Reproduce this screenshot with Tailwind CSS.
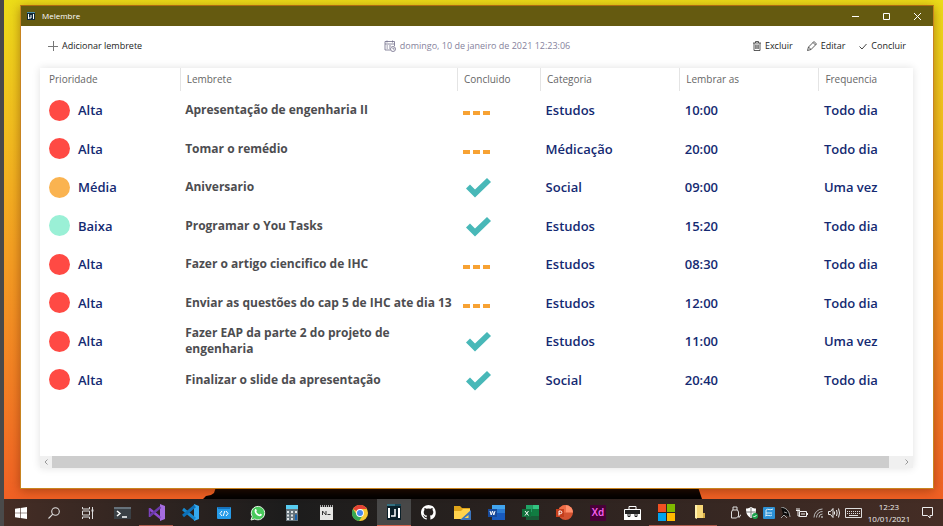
<!DOCTYPE html>
<html lang="pt-BR">
<head>
<meta charset="utf-8">
<meta name="viewport" content="width=device-width, initial-scale=1">
<title>Melembre</title>
<script src="https://cdn.jsdelivr.net/npm/@tailwindcss/browser@4"></script>
</head>
<body class="flex h-screen overflow-hidden bg-[#4a4a4a] pl-1 font-['Open_Sans','Noto_Sans',sans-serif]">
<svg class="hidden">
  <symbol id="pending" viewBox="0 0 28 24"><path d="M0 13h7v4H0zM10 13h7v4h-7zM20 13h7v4h-7z" fill="#f7a233"/></symbol>
  <symbol id="done" viewBox="0 0 28 24"><path d="M3 13.500 7 9.500 12 14.500 24 3 28 7 12 22.500z" fill="#48b8b8"/></symbol>
</svg>
<div class="flex min-w-0 flex-1 flex-col">
  <main class="relative flex flex-1 flex-col bg-linear-to-b from-[#ecdc18] via-[#f4a022] to-[#f06024] pt-[5px] pr-[9px] pb-[10px] pl-4">
    <svg class="absolute bottom-0 left-[199px] h-[12px] w-[502px]" viewBox="0 0 502 12" preserveAspectRatio="none" aria-hidden="true"><path d="M0 12 3 9 8 8 11 6 13 0H495L499 12z" fill="#000"/></svg>
    <section class="relative flex flex-1 flex-col border border-[#c88420] border-t-[#b06a10] bg-white shadow-[0_2px_10px_rgba(90,30,0,0.45)]">
      <header class="flex h-5 items-center bg-[#655a10] text-white">
        <svg class="ml-[6px] size-2" viewBox="0 0 8 8" aria-hidden="true"><path fill="#102a38" d="M0 0h8v8H0z"/><path fill="#4a8aa0" d="M0 0h8v1H0z"/><path d="M1.500 2v5M6.500 2v5M2 6h2V3" stroke="#fff" fill="none"/></svg>
        <h1 class="ml-[7px] flex-1 text-[8px] font-medium">Melembre</h1>
        <button aria-label="Minimizar" class="flex h-5 w-[31px] items-center justify-center"><svg class="size-[7px]" viewBox="0 0 7 7"><path d="M0 3.500h7" stroke="#fff"/></svg></button>
        <button aria-label="Maximizar" class="flex h-5 w-[31px] items-center justify-center"><svg class="size-[7px]" viewBox="0 0 7 7"><path d="M.5.500h6v6h-6z" stroke="#fff" fill="none"/></svg></button>
        <button aria-label="Fechar" class="flex h-5 w-[31px] items-center justify-center"><svg class="size-[7px]" viewBox="0 0 7 7"><path d="m0 0 7 7m0-7-7 7" stroke="#fff" fill="none"/></svg></button>
      </header>
      <div class="grid h-[42px] grid-cols-[1fr_auto_1fr] items-center px-[27px] pb-[3px] text-[9px] text-[#1c1c1c]">
        <button class="flex items-center gap-1 justify-self-start"><svg class="size-[10px]" viewBox="0 0 10 10" fill="none" stroke="#777"><path d="M5.500 0v10M0 5.500h10"/></svg>Adicionar lembrete</button>
        <p class="flex items-center gap-1 text-[#85829c]"><svg class="size-3" viewBox="0 0 24 24" fill="none" stroke="#77748f" stroke-width="1.700"><path d="M13 20H2V3h19v9M2 8h19M6 1v4M17 1v4M5 12h3M10 12h4M5 16h3M10 16h2"/><circle cx="18" cy="18" r="5"/><path d="M18 15v3h3"/></svg><time datetime="2021-01-10T12:23:06">domingo, 10 de janeiro de 2021 12:23:06</time></p>
        <div class="flex gap-[14px] justify-self-end">
          <button class="flex items-center gap-1"><svg class="h-[10px] w-2" viewBox="0 0 16 20" fill="none" stroke="#333" stroke-width="1.600"><path d="M0 4h16M5 4V1h6v3M2 4v15h12V4M5.500 7v9M8 7v9M10.500 7v9"/></svg>Excluir</button>
          <button class="flex items-center gap-1"><svg class="size-[10px]" viewBox="0 0 20 20" fill="none" stroke="#333" stroke-width="1.600"><path d="m1 19 2-7L14 1l5 5L8 17zM12 3l5 5M3 12l5 5"/></svg>Editar</button>
          <button class="flex items-center gap-1"><svg class="h-[10px] w-2" viewBox="0 0 8 10" fill="none" stroke="#444"><path d="M.5 5.500 3 8l4.500-5"/></svg>Concluir</button>
        </div>
      </div>
      <div class="mr-5 mb-5 ml-[19px] flex flex-1 flex-col bg-white shadow-[0_0_8px_rgba(0,0,0,0.12)]">
        <div class="flex-1">
          <table class="w-full table-fixed text-left">
            <thead>
              <tr class="h-[23px] text-[10px] text-[#666]">
                <th class="w-[140px] pl-[9px] font-normal">Prioridade</th>
                <th class="w-[277px] border-l border-[#e4e4e4] pl-[6px] font-normal">Lembrete</th>
                <th class="w-[83px] border-l border-[#e4e4e4] pl-[6px] font-normal">Concluido</th>
                <th class="w-[139px] border-l border-[#e4e4e4] pl-[6px] font-normal">Categoria</th>
                <th class="w-[139px] border-l border-[#e4e4e4] pl-[6px] font-normal">Lembrar as</th>
                <th class="w-[94px] border-l border-[#e4e4e4] pl-[6px] font-normal">Frequencia</th>
              </tr>
            </thead>
            <tbody id="reminders" class="text-[13px] leading-4 font-semibold text-[#142a72]"></tbody>
          </table>
        </div>
        <div class="flex h-3 bg-[#f0f0f0]">
          <button aria-label="Rolar para a esquerda" class="flex w-3 items-center justify-center"><svg class="h-[6px] w-1" viewBox="0 0 4 6"><path d="M3.500.5 1 3l2.500 2.500" fill="none" stroke="#999"/></svg></button>
          <div class="flex-1 bg-[#cdcdcd]"></div>
          <button aria-label="Rolar para a direita" class="flex w-6 items-center justify-end pr-1"><svg class="h-[6px] w-1" viewBox="0 0 4 6"><path d="M.5.5 3 3 .5 5.500" fill="none" stroke="#999"/></svg></button>
        </div>
      </div>
    </section>
  </main>
  <footer class="flex h-[27px] items-center bg-linear-to-r from-[#452d25] via-[#1c1c1c] via-30% to-[#452d25] text-[#eee]">
    <nav class="flex h-full" aria-label="Barra de tarefas">
      <button aria-label="Iniciar" class="flex w-[33px] items-center justify-center"><svg class="size-3" viewBox="0 0 12 12" fill="#fff"><path d="M0 1.700 5 1v4.700H0zM5.600.9 12 0v5.700H5.600zM0 6.300h5V11l-5-.7zM5.600 6.300H12V12l-6.400-.9z"/></svg></button>
      <button aria-label="Pesquisar" class="flex w-[34px] items-center justify-center"><svg class="size-3" viewBox="0 0 12 12" fill="none" stroke="#ddd" stroke-width="1.100"><circle cx="7.500" cy="4.500" r="3.800"/><path d="M4.800 7.200.5 11.500"/></svg></button>
      <button aria-label="Visão de tarefas" class="flex w-[34px] items-center justify-center"><svg class="size-3" viewBox="0 0 12 12" fill="none" stroke="#ddd"><path d="M.5 0v2h7V0M.5 4h7v4h-7zM.5 12v-2h7v2M10.500 0v12"/><path d="M9.500 3.500h2" stroke-width="2"/></svg></button>
      <button aria-label="Terminal" class="flex w-[34px] items-center justify-center"><svg class="h-3 w-[17px]" viewBox="0 0 17 12"><path fill="#3a4045" d="M0 0h17v12H0z"/><path fill="#66717a" d="M0 0h17v2H0z"/><path d="m3 4 3 2.500L3 9M8 10h5" stroke="#fff" stroke-width="1.500" fill="none"/></svg></button>
      <button aria-label="Visual Studio" class="flex w-[34px] items-center justify-center border-b border-[#aa594a]"><svg class="size-[17px]" viewBox="0 0 17 17"><path fill="#a56de0" d="m12 0 5 2v13l-5 2z"/><path fill="none" stroke="#8f4bd0" stroke-width="2.500" d="m1.500 5 11 9"/><path fill="none" stroke="#6a39a9" stroke-width="2.500" d="M1.500 12 12.500 3"/><path fill="none" stroke="#7b42bb" stroke-width="1.500" d="M1.500 4v9"/></svg></button>
      <button aria-label="Visual Studio Code" class="flex w-[34px] items-center justify-center"><svg class="size-[17px]" viewBox="0 0 17 17"><path fill="#35a9ee" d="m12 0 5 2v13l-5 2z"/><path fill="none" stroke="#1788cd" stroke-width="3" d="m1 5 12 10"/><path fill="none" stroke="#0c70b8" stroke-width="3" d="M1 12 13 2"/></svg></button>
      <button aria-label="Editor de código" class="flex w-[34px] items-center justify-center"><svg class="h-3 w-[14px]" viewBox="0 0 14 12"><rect width="14" height="12" rx="1" fill="#269be8"/><path fill="#1571bb" d="M1 0h12v2H1z"/><path d="M5 4 3 6.500 5 9M9 4l2 2.500L9 9M7.800 4 6.200 9" stroke="#fff" fill="none"/></svg></button>
      <button aria-label="WhatsApp" class="flex w-[34px] items-center justify-center"><svg class="size-4" viewBox="0 0 16 16"><path d="M1 15 2.200 11.500A6.700 6.700 0 1 1 4.800 14z" fill="#48c95b" stroke="#e8f8e8"/><path d="M5 4.500c.8-1 1.500 0 1.800 1 .2.600-.7.900-.4 1.400.8 1.300 1.600 2 2.900 2.600.5.200.8-1 1.400-.7 1 .5 1.700.7.800 1.700C9 13 3 7.800 5 4.500z" fill="#fff"/></svg></button>
      <button aria-label="Calculadora" class="flex w-[34px] items-center justify-center"><svg class="h-4 w-3" viewBox="0 0 12 16"><path fill="#66737b" d="M0 0h12v16H0z"/><path fill="#58cdf1" d="M0 0h12v4H0z"/><path d="M1 7h2M5 7h2M9 7h2M1 10.500h2M5 10.500h2M1 14h2M5 14h2" stroke="#e0e5e8" stroke-width="2"/><path d="M9 9.500h2V15H9z" fill="#1762ac"/></svg></button>
      <button aria-label="Notas" class="flex w-[34px] items-center justify-center"><svg class="h-[15px] w-[13px]" viewBox="0 0 13 15"><path fill="#e6e6e4" d="M0 2h13v13H0z"/><path d="M0 1h13" stroke="#aaa" stroke-width="2" stroke-dasharray="1 1"/><path d="M2.500 10V6L6 10V6M7.500 9.500h3" stroke="#333" fill="none"/></svg></button>
      <button aria-label="Chrome" class="flex w-[34px] items-center justify-center"><svg class="size-4" viewBox="0 0 16 16"><circle cx="8" cy="8" r="8" fill="#f6c934"/><path fill="#e44336" d="M8 8 1 4a8 8 0 0 1 14 0H8z"/><path fill="#35a853" d="M1 4a8 8 0 0 0 6 12l4-6-6 0z"/><circle cx="8" cy="8" r="3.900" fill="#fff"/><circle cx="8" cy="8" r="3" fill="#4688ef"/></svg></button>
      <button aria-label="Melembre" class="flex w-[34px] items-center justify-center border-b border-[#d0604a] bg-[#484848]"><svg class="h-4 w-[14px]" viewBox="0 0 14 16"><path fill="#0b2029" d="M0 0h14v16H0z"/><path fill="#347080" d="M0 0h14v2H0z"/><path fill="#164858" d="M8 0h6v2H8z"/><path d="M2 4v10M12 4v10" stroke="#fff" stroke-width="2"/><path d="M4 12h4V5" stroke="#fff" stroke-width="1.500" fill="none"/></svg></button>
      <button aria-label="GitHub" class="flex w-[34px] items-center justify-center"><svg class="size-[15px]" viewBox="0 0 16 16" fill="#fff"><path d="M8 0a8 8 0 0 0-2.530 15.590c.4.070.55-.17.550-.38v-1.500c-2.220.48-2.700-1.070-2.700-1.070-.36-.92-.89-1.170-.89-1.170-.73-.5.050-.49.050-.49.800.060 1.230.83 1.230.83.720 1.220 1.880.87 2.330.66.070-.52.280-.87.510-1.070-1.770-.2-3.640-.89-3.640-3.950 0-.87.310-1.590.82-2.150-.08-.2-.36-1.020.080-2.120 0 0 .67-.21 2.200.82a7.600 7.600 0 0 1 4 0c1.530-1.040 2.200-.82 2.200-.82.440 1.100.16 1.920.080 2.120.51.560.82 1.270.82 2.150 0 3.070-1.870 3.750-3.650 3.950.29.250.54.730.54 1.480v2.200c0 .21.150.46.550.38A8 8 0 0 0 8 0z"/></svg></button>
      <button aria-label="Explorador" class="flex w-[34px] items-center justify-center"><svg class="h-[14px] w-[17px]" viewBox="0 0 17 14"><path fill="#dfa419" d="M0 0h6l2 2h8v11H0z"/><path fill="#ffd34d" d="M0 5h7l2-2h7v10H0z"/><path fill="#3b75bd" fill-rule="evenodd" d="M17 4v10H6zM14.500 9v3h-4z"/></svg></button>
      <button aria-label="Word" class="flex w-[34px] items-center justify-center"><svg class="h-[15px] w-[17px]" viewBox="0 0 17 15"><path fill="#42a5ee" d="M4 0h13v4H4z"/><path fill="#2b7cd3" d="M4 4h13v4H4z"/><path fill="#185abd" d="M4 8h13v7H4z"/><path fill="#174a9b" d="M0 4h9v8H0z"/><path d="m2 6 1.200 4L4.500 6l1.300 4L7 6" fill="none" stroke="#fff"/></svg></button>
      <button aria-label="Excel" class="flex w-[34px] items-center justify-center"><svg class="h-[15px] w-[17px]" viewBox="0 0 17 15"><path fill="#21a366" d="M4 0h6.500v7H4z"/><path fill="#33c481" d="M10.500 0H17v4h-6.500z"/><path fill="#107c41" d="M10.500 4H17v7h-6.500zM4 7h6.500v8H4z"/><path fill="#185c37" d="M4 11h13v4H4z"/><path fill="#10703b" d="M0 4h9v8H0z"/><path d="m3 6 3.500 4.500M6.500 6 3 10.500" fill="none" stroke="#fff"/></svg></button>
      <button aria-label="PowerPoint" class="flex w-[34px] items-center justify-center"><svg class="h-[15px] w-[17px]" viewBox="0 0 17 15"><circle cx="9.500" cy="7.500" r="7.500" fill="#d35230"/><path fill="#ff8f6b" d="M9.500 0a7.500 7.500 0 0 1 7.500 7.500H9.500z"/><path fill="#ed6c47" d="M9.500 0v7.500H2A7.500 7.500 0 0 1 9.500 0z"/><path fill="#c43e1c" d="M0 4h8v8H0z"/><path d="M3 10.500V6h1.500a1.300 1.300 0 0 1 0 2.700H3" fill="none" stroke="#fff"/></svg></button>
      <button aria-label="Adobe XD" class="flex w-[34px] items-center justify-center"><span class="flex h-4 w-4 items-center justify-center bg-[#470137] text-[10px] font-semibold text-[#ff61f6]">Xd</span></button>
      <button aria-label="Ferramentas" class="flex w-[34px] items-center justify-center"><svg class="h-[14px] w-[17px]" viewBox="0 0 17 14"><path d="M5 3V.5h7V3" fill="none" stroke="#fff"/><path d="M.5 3.500h16v5H.5z" fill="#222" stroke="#fff"/><path fill="#fff" d="M0 8h17v6H0z"/><path d="M4 8v2.500h2V8M11 8v2.500h2V8" stroke="#222" fill="none"/></svg></button>
      <button aria-label="Microsoft" class="flex w-[34px] items-center justify-center border-b border-[#aa594a]"><svg class="size-[17px]" viewBox="0 0 17 17"><path fill="#f25022" d="M0 0h8v8H0z"/><path fill="#7fba00" d="M9 0h8v8H9z"/><path fill="#00a4ef" d="M0 9h8v8H0z"/><path fill="#ffb900" d="M9 9h8v8H9z"/></svg></button>
      <button aria-label="Pasta" class="flex w-[34px] items-center justify-center border-b border-[#aa594a]"><svg class="h-[14px] w-[10px]" viewBox="0 0 10 14"><path fill="#f7d777" d="M0 0h8v8h2v5H0z"/><path fill="#fff0ad" d="M0 0h2v14L0 13z"/><path fill="#d7ad46" d="M8 8h2v5H8z"/></svg></button>
    </nav>
    <div class="ml-auto flex items-center">
      <div class="mr-[5px] flex items-center gap-[5px]">
        <svg class="h-[13px] w-3" viewBox="0 0 12 13" fill="none" stroke="#ddd"><path d="M4 4V1h4v3M2.500 12V6l1-2h5l1 2v4l-2 2z"/><path d="m9 10 1 1.500 2-3"/></svg>
        <svg class="size-3" viewBox="0 0 12 12"><path d="M5 0C3 1.500 1.500 1.500 0 1.500 0 6 1 9 5 11c4-2 5-5 5-9.500C8.500 1.500 7 1.500 5 0z" fill="#fff"/><path d="M5 1v9M0 5h9" stroke="#777"/><circle cx="9" cy="9" r="3" fill="#1da34e"/><path d="m7.500 9 1 1 2-2" stroke="#fff" fill="none"/></svg>
        <svg class="size-3" viewBox="0 0 12 12"><rect width="12" height="12" rx="1" fill="#2d91d5"/><path d="M3 3c2-2 4 1 7-1M3 6h6M2 9c3-2 5 1 7-1M3 3v5" stroke="#d8eefb" fill="none"/></svg>
        <svg class="h-3 w-[11px]" viewBox="0 0 11 12"><path d="M1 0c5 0 8 3 9 10L6 8 1 11l2-4z" fill="#0b0b0b"/><path d="M1 0c5 1 8 3 9 10M1 11l3-3 3 3M4 5l3 1" stroke="#ccc" stroke-width=".8" fill="none"/></svg>
        <svg class="h-[10px] w-3" viewBox="0 0 12 10" fill="none" stroke="#eee"><path d="M3.500 3.500h7v5h-7zM11.500 5v2M1 0v2M3 0v2M0 2.500h4M2 3v5h2M5 6h4"/></svg>
        <svg class="size-[10px]" viewBox="0 0 10 10" fill="none" stroke="#bbb"><path d="M1 9.500A8.500 8.500 0 0 1 9.500 1M3.500 9.500a6 6 0 0 1 6-6M6 9.500A3.500 3.500 0 0 1 9.500 6"/><circle cx="9" cy="9" r=".6"/></svg>
        <svg class="h-[10px] w-3" viewBox="0 0 12 10" fill="none" stroke="#eee"><path d="M.5 3.500h2l2.500-3v9l-2.500-3h-2zM6.500 3.500v3M8.500 2q1.300 3 0 6M10.500.5q2 4.500 0 9"/></svg>
        <svg class="h-[10px] w-[17px]" viewBox="0 0 17 10" fill="none" stroke="#ddd"><path d="M.5.500h16v9H.5z"/><path d="M2 3.500h13M2 5.500h13" stroke-dasharray="1 1"/><path d="M4 7.500h9"/></svg>
      </div>
      <p class="w-11 text-center text-[8px] leading-3">12:23<br>10/01/2021</p>
      <button aria-label="Notificações" class="flex w-8 items-center justify-center"><svg class="h-3 w-[11px]" viewBox="0 0 11 12"><path d="M.5.500h10v8H8V11L5.500 8.500h-5z" fill="none" stroke="#eee"/></svg></button>
    </div>
  </footer>
</div>
<script>
const dots = { Alta: 'bg-[#ff4a44]', 'Média': 'bg-[#fab350]', Baixa: 'bg-[#9af0d6]' };
const reminders = [
  ['Alta', 'Apresentação de engenharia II', false, 'Estudos', '10:00', 'Todo dia'],
  ['Alta', 'Tomar o remédio', false, 'Médicação', '20:00', 'Todo dia'],
  ['Média', 'Aniversario', true, 'Social', '09:00', 'Uma vez'],
  ['Baixa', 'Programar o You Tasks', true, 'Estudos', '15:20', 'Todo dia'],
  ['Alta', 'Fazer o artigo ciencifico de IHC', false, 'Estudos', '08:30', 'Todo dia'],
  ['Alta', 'Enviar as questões do cap 5 de IHC ate dia 13', false, 'Estudos', '12:00', 'Todo dia'],
  ['Alta', 'Fazer EAP da parte 2 do projeto de engenharia', true, 'Estudos', '11:00', 'Uma vez'],
  ['Alta', 'Finalizar o slide da apresentação', true, 'Social', '20:40', 'Todo dia']
];
document.getElementById('reminders').innerHTML = reminders.map(([priority, title, done, category, time, frequency]) => `
  <tr class="h-[38px] even:h-[39px]">
    <td class="p-0 pl-[9px]"><div class="flex items-center gap-2"><span class="size-[21px] rounded-full ${dots[priority]}"></span>${priority}</div></td>
    <td class="p-0 pl-[5px] text-xs leading-4 font-bold text-[#4d4d50]">${title}</td>
    <td class="p-0 pl-[6px]"><svg class="h-6 w-7" role="img" aria-label="${done ? 'Concluído' : 'Pendente'}"><use href="${done ? '#done' : '#pending'}"/></svg></td>
    <td class="p-0 pl-[5px]">${category}</td>
    <td class="p-0 pl-[5px]"><time>${time}</time></td>
    <td class="p-0 pl-[5px]">${frequency}</td>
  </tr>`).join('');
</script>
</body>
</html>
